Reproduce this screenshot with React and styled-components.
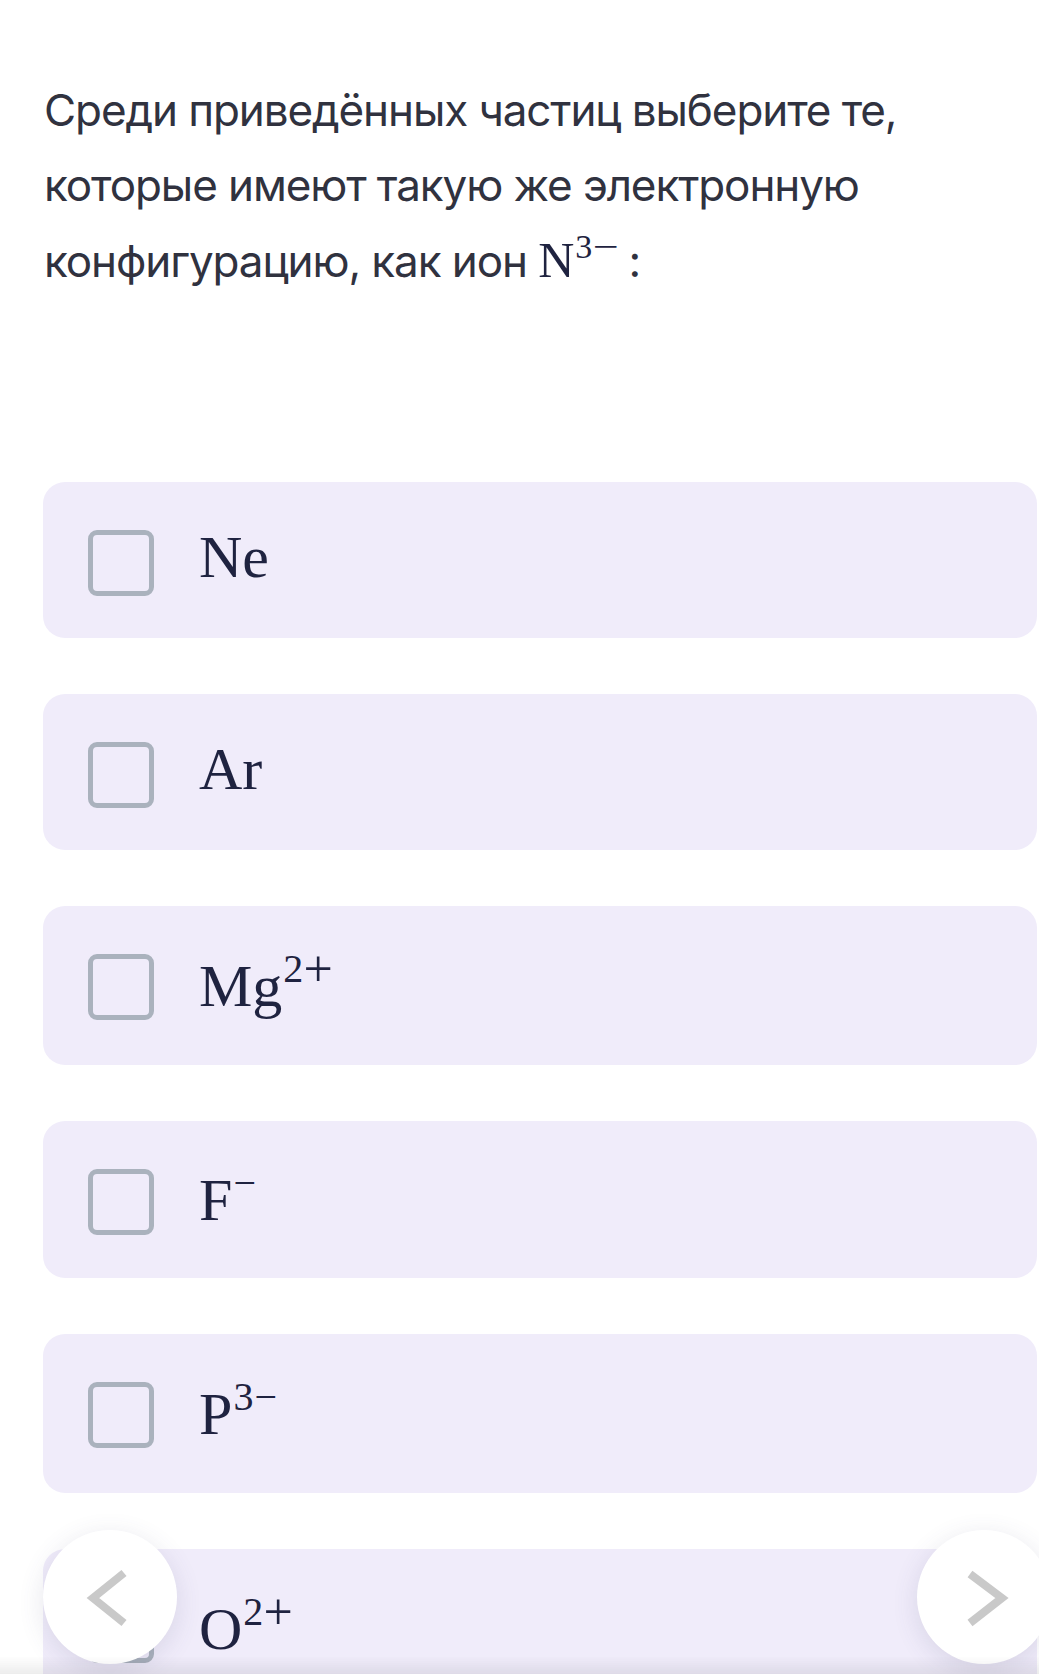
import React from 'react'
import styled, { createGlobalStyle } from 'styled-components'

const GlobalStyle = createGlobalStyle`
  html, body {
    margin: 0;
    padding: 0;
    background: #fff;
    overflow: hidden;
  }
  body {
    font-family: Inter, 'Noto Sans', sans-serif;
  }
`

const Page = styled.div`
  padding: 73px 2px 0 43px;
  height: 1674px;
  box-sizing: border-box;
  overflow: hidden;
`

const Question = styled.p`
  margin: 0 0 183px 1px;
  font-size: 44px;
  line-height: 75px;
  color: #30323f;
  letter-spacing: -1.1px;
`

const Formula = styled.span`
  font-family: 'Liberation Serif', 'Times New Roman', serif;
  font-size: 50px;
  letter-spacing: 0;
  color: #1f2340;
`

const Sup = styled.span`
  font-size: ${(p) => (p.$small ? '34px' : '40px')};
  line-height: ${(p) => (p.$small ? '0' : '40px')};
  vertical-align: ${(p) => (p.$small ? '19px' : '24px')};
  margin-left: 1px;
  letter-spacing: 1px;
`

// Computer Modern signs are wider than the Times ones
const Sign = styled.span`
  display: inline-block;
  margin: 0 4px 0 3px;
  transform: ${(p) => (p.$plus ? 'scale(1.3)' : 'scaleX(1.35)')};
`

const Colon = styled.span`
  margin-left: 8px;
`

const Options = styled.div`
  display: flex;
  flex-direction: column;
  gap: 56px;
`

const Option = styled.label`
  display: flex;
  align-items: flex-start;
  padding: ${(p) => 48 + p.$shift}px 0 ${(p) => 42 + p.$grow - p.$shift}px 45px;
  background: #f0ecfa;
  border-radius: 22px;
  cursor: pointer;
`

const Box = styled.span`
  flex: none;
  width: 66px;
  height: 66px;
  margin-top: ${(p) => -p.$shift}px;
  box-sizing: border-box;
  border: 5px solid #aab2bd;
  border-radius: 9px;
  margin-right: 45px;
`

const Label = styled.span`
  display: block;
  margin-top: -6px;
  font-family: 'Liberation Serif', 'Times New Roman', serif;
  font-size: 60px;
  line-height: 66px;
  color: #1f2340;
`

const NavButton = styled.button`
  position: fixed;
  top: 1530px;
  ${(p) => (p.$side === 'left' ? 'left: 43px;' : 'left: 917px;')}
  width: 134px;
  height: 134px;
  padding: 0;
  border: none;
  border-radius: 50%;
  background: #fff;
  box-shadow: 0 6px 26px rgba(70, 70, 110, 0.14);
  cursor: pointer;

  svg {
    display: block;
  }
`

const BottomShade = styled.div`
  position: fixed;
  left: 0;
  right: 0;
  bottom: 0;
  height: 18px;
  background: linear-gradient(to bottom, rgba(0, 0, 0, 0), rgba(0, 0, 0, 0.07));
  pointer-events: none;
`

// charged ions sit in slightly taller cards
const options = [
  { base: 'Ne', shift: 0, grow: 0 },
  { base: 'Ar', shift: 0, grow: 0 },
  { base: 'Mg', num: '2', sign: '+', shift: 1, grow: 4 },
  { base: 'F', num: '', sign: '\u2212', shift: 0, grow: 1 },
  { base: 'P', num: '3', sign: '\u2212', shift: 1, grow: 4 },
  { base: 'O', num: '2', sign: '+', shift: 1, grow: 4 },
]

const App = () => {
  return (
    <>
      <GlobalStyle />
      <Page>
        <Question>
          Среди приведённых частиц выберите те, которые имеют такую же
          электронную конфигурацию, как ион{' '}
          <Formula>
            N
            <Sup $small>
              3<Sign>{'\u2212'}</Sign>
            </Sup>
          </Formula>
          <Colon>:</Colon>
        </Question>
        <Options>
          {options.map((o) => (
            <Option key={o.base} $shift={o.shift} $grow={o.grow}>
              <Box $shift={o.shift} />
              <Label>
                {o.base}
                {o.sign && (
                  <Sup>
                    {o.num}
                    {o.sign === '+' ? <Sign $plus>+</Sign> : o.sign}
                  </Sup>
                )}
              </Label>
            </Option>
          ))}
        </Options>
      </Page>
      <NavButton $side='left' aria-label='Назад'>
        <svg width='134' height='134' viewBox='0 0 134 134'>
          <polyline points='81,43 50,68 81,93' fill='none' stroke='#c9c9c9' strokeWidth='8' />
        </svg>
      </NavButton>
      <NavButton $side='right' aria-label='Вперёд'>
        <svg width='134' height='134' viewBox='0 0 134 134'>
          <polyline points='53,44 85,68 53,93' fill='none' stroke='#c9c9c9' strokeWidth='8' />
        </svg>
      </NavButton>
      <BottomShade />
    </>
  )
}

export default App
